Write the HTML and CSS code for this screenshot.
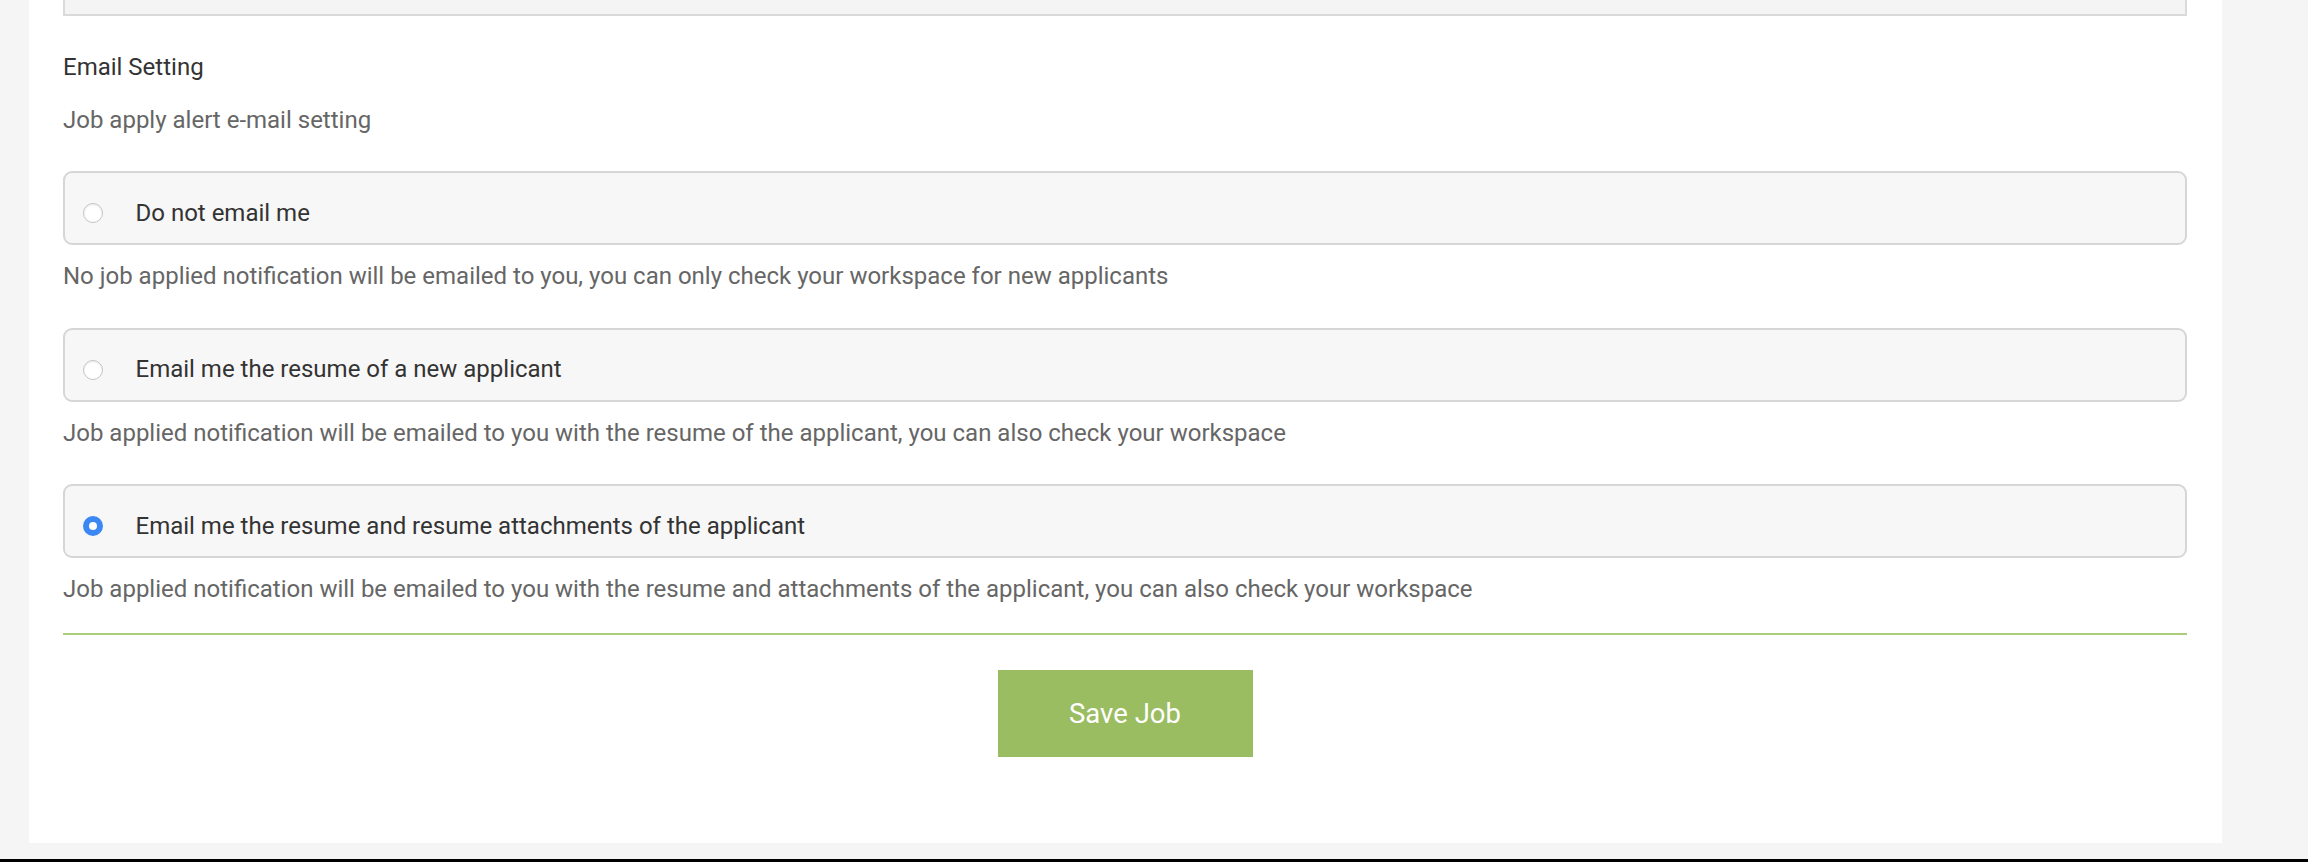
FILE: index.html
```html
<!DOCTYPE html>
<html lang="en">
<head>
<meta charset="utf-8">
<title>Email Setting</title>
<link rel="stylesheet" href="styles.css">
</head>
<body>
<div class="page">
  <div class="panel">
    <div class="prev-box"></div>
    <h3 class="section-title">Email Setting</h3>
    <p class="section-sub">Job apply alert e-mail setting</p>

    <div class="option option-first">
      <label class="option-box">
        <span class="radio"></span>
        <span class="option-label">Do not email me</span>
      </label>
      <p class="option-desc">No job applied notification will be emailed to you, you can only check your workspace for new applicants</p>
    </div>

    <div class="option">
      <label class="option-box">
        <span class="radio"></span>
        <span class="option-label">Email me the resume of a new applicant</span>
      </label>
      <p class="option-desc">Job applied notification will be emailed to you with the resume of the applicant, you can also check your workspace</p>
    </div>

    <div class="option option-last">
      <label class="option-box">
        <span class="radio radio-checked"></span>
        <span class="option-label">Email me the resume and resume attachments of the applicant</span>
      </label>
      <p class="option-desc">Job applied notification will be emailed to you with the resume and attachments of the applicant, you can also check your workspace</p>
    </div>

    <div class="divider"></div>

    <div class="actions">
      <button class="btn-save" type="button">Save Job</button>
    </div>
  </div>
  <div class="bottom-gap"></div>
  <div class="black-bar"></div>
</div>
</body>
</html>
```

FILE: styles.css
```css
html, body {
  margin: 0;
  padding: 0;
}

body {
  background: #f5f5f5;
  font-family: Roboto, "Liberation Sans", Arial, sans-serif;
  font-size: 24px;
  color: #333333;
}

.page {
  display: flex;
  flex-direction: column;
  width: 2308px;
  height: 862px;
  overflow: hidden;
}

.panel {
  margin-left: 29px;
  width: 2193px;
  height: 843px;
  flex-shrink: 0;
  box-sizing: border-box;
  background: #ffffff;
  padding: 0 35px 0 34px;
  display: flex;
  flex-direction: column;
}

.prev-box {
  height: 14px;
  background: #f4f4f4;
  border: 2px solid #dadada;
  border-top: none;
  flex-shrink: 0;
}

.section-title {
  margin: 34px 0 0 0;
  font-size: 24px;
  font-weight: 400;
  line-height: 35px;
  color: #333333;
}

.section-sub {
  margin: 18px 0 0 0;
  font-size: 24px;
  line-height: 35px;
  color: #666666;
}

.option {
  display: flex;
  flex-direction: column;
}

.option-first {
  margin-top: 33px;
}

.option-box {
  display: flex;
  align-items: center;
  height: 35px;
  padding: 22.5px 18px 12.5px 17.5px;
  background: #f7f7f7;
  border: 2px solid #d6d6d6;
  border-radius: 9px;
}

.radio {
  width: 20px;
  height: 20px;
  box-sizing: border-box;
  border-radius: 50%;
  background: #ffffff;
  border: 1px solid #c4c4c4;
  box-shadow: inset 0 1px 2px rgba(0, 0, 0, 0.08);
  flex-shrink: 0;
}

.radio-checked {
  background: #ffffff;
  border: 6px solid #3b88f5;
  box-shadow: none;
}

.option-label {
  margin-left: 33px;
  line-height: 35px;
  color: #333333;
}

.option-desc {
  margin: 14px 0 33.5px 0;
  line-height: 35px;
  color: #666666;
}

.option-last .option-desc {
  margin-bottom: 0;
}

.divider {
  margin-top: 26px;
  height: 2px;
  background: #aacd79;
  flex-shrink: 0;
}

.actions {
  display: flex;
  justify-content: center;
  margin-top: 34.5px;
}

.btn-save {
  width: 255px;
  height: 87px;
  border: none;
  border-radius: 0;
  background: #9abd61;
  color: #ffffff;
  font-family: Roboto, "Liberation Sans", Arial, sans-serif;
  font-size: 27.5px;
  font-weight: 400;
  padding: 0;
  cursor: pointer;
}

.bottom-gap {
  height: 16px;
  flex-shrink: 0;
}

.black-bar {
  height: 3px;
  background: #000000;
  flex-shrink: 0;
}
```
